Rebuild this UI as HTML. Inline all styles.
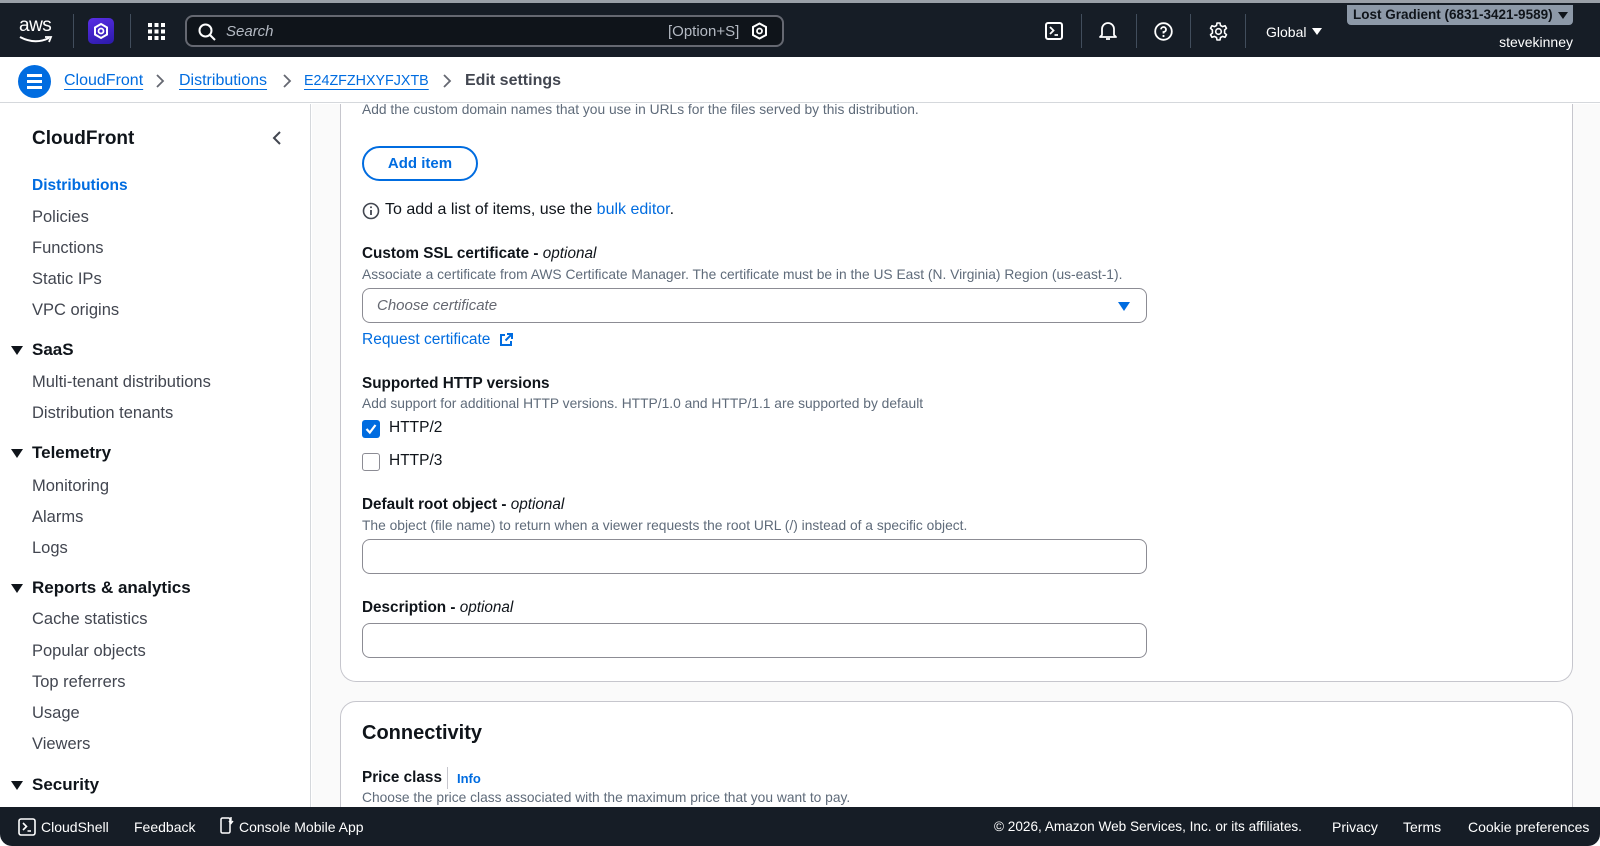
<!DOCTYPE html>
<html style="width:1600px;height:846px;overflow:hidden"><head><meta charset="utf-8"><style>
*{margin:0;padding:0;box-sizing:border-box}
body{width:1600px;height:846px;overflow:hidden;background:#fff;font-family:"Liberation Sans",Arial,sans-serif;color:#0f141a;position:relative}
.a{position:absolute;white-space:nowrap}
.t{line-height:20px}
.nav{position:absolute;left:0;top:3px;width:1600px;height:54px;background:#161d26}
.lnk{color:#006ce0;text-decoration:underline;text-underline-offset:4px}
.side{font-size:16.5px;color:#424650;line-height:20px}
.sh{font-size:17px;font-weight:bold;color:#0f141a;line-height:22px}
.tri{position:absolute;left:11px;width:0;height:0;border-left:6px solid transparent;border-right:6px solid transparent;border-top:9px solid #0f141a}
.lbl{font-size:15.3px;font-weight:bold;line-height:20px}
.lbl i{font-weight:normal}
.desc{font-size:13.8px;color:#5f6b7a;line-height:18px}
.inp{position:absolute;left:362px;width:785px;height:35px;border:1px solid #8c8c94;border-radius:8px;background:#fff}
</style></head><body>
<div class="a" style="left:0;top:0;width:1600px;height:3px;background:#9aa0a8"></div>
<div class="nav"></div>
<div class="a" style="left:19px;top:16px;color:#fff;font-size:19px;line-height:20px;letter-spacing:-0.5px">aws</div>
<svg class="a" style="left:18px;top:35px" width="36" height="10" viewBox="0 0 36 10"><path d="M2 2 Q17 10 31 3" stroke="#fff" stroke-width="2" fill="none"/><path d="M27 2 L33 2 L31 7" stroke="#fff" stroke-width="1.8" fill="none"/></svg>
<div class="a" style="left:73px;top:14px;width:1px;height:34px;background:#414d5c"></div>
<div class="a" style="left:88px;top:18px;width:26px;height:26px;border-radius:5px;background:linear-gradient(160deg,#5a2ee6,#2a1aa8)"></div>
<svg class="a" style="left:92px;top:22px" width="18" height="18" viewBox="0 0 18 18"><path d="M9 2 L15 5.5 L15 12.5 L9 16 L3 12.5 L3 5.5 Z" stroke="#fff" stroke-width="2" fill="none"/><circle cx="9" cy="9" r="2.5" stroke="#fff" stroke-width="1.8" fill="none"/></svg>
<div class="a" style="left:130px;top:14px;width:1px;height:34px;background:#414d5c"></div>
<svg class="a" style="left:148px;top:23px" width="17" height="17" viewBox="0 0 17 17" fill="#fff"><rect x="0" y="0" width="4" height="4"/><rect x="6.5" y="0" width="4" height="4"/><rect x="13" y="0" width="4" height="4"/><rect x="0" y="6.5" width="4" height="4"/><rect x="6.5" y="6.5" width="4" height="4"/><rect x="13" y="6.5" width="4" height="4"/><rect x="0" y="13" width="4" height="4"/><rect x="6.5" y="13" width="4" height="4"/><rect x="13" y="13" width="4" height="4"/></svg>
<div class="a" style="left:185px;top:15px;width:599px;height:32px;border:2px solid #656871;border-radius:8px;background:#0f141a"></div>
<svg class="a" style="left:198px;top:23px" width="18" height="18" viewBox="0 0 18 18"><circle cx="7.5" cy="7.5" r="6" stroke="#fff" stroke-width="2" fill="none"/><path d="M12 12 L17 17" stroke="#fff" stroke-width="2"/></svg>
<div class="a" style="left:226px;top:22px;color:#b4bac3;font-size:15px;font-style:italic;line-height:20px">Search</div>
<div class="a" style="left:668px;top:22px;color:#b4bac3;font-size:15px;line-height:20px">[Option+S]</div>
<svg class="a" style="left:751px;top:22px" width="17" height="18" viewBox="0 0 17 18"><path d="M8.5 1.5 L15 5 L15 13 L8.5 16.5 L2 13 L2 5 Z" stroke="#fff" stroke-width="2" fill="none"/><circle cx="8.5" cy="9" r="2.5" stroke="#fff" stroke-width="1.8" fill="none"/></svg>
<svg class="a" style="left:1045px;top:22px" width="18" height="18" viewBox="0 0 18 18"><rect x="1" y="1" width="16" height="16" rx="2" stroke="#fff" stroke-width="2" fill="none"/><path d="M5 5 L8.5 8.5 L5 12 M9.5 13 H13" stroke="#fff" stroke-width="1.8" fill="none"/></svg>
<div class="a" style="left:1081px;top:14px;width:1px;height:34px;background:#414d5c"></div>
<svg class="a" style="left:1099px;top:21px" width="18" height="20" viewBox="0 0 18 20"><path d="M3 14 L3 8 A6 6 0 0 1 15 8 L15 14 L17 16 L1 16 Z" stroke="#fff" stroke-width="1.8" fill="none" stroke-linejoin="round"/><path d="M7 18 H11" stroke="#fff" stroke-width="1.8"/></svg>
<div class="a" style="left:1136px;top:14px;width:1px;height:34px;background:#414d5c"></div>
<svg class="a" style="left:1154px;top:22px" width="19" height="19" viewBox="0 0 19 19"><circle cx="9.5" cy="9.5" r="8.3" stroke="#fff" stroke-width="1.8" fill="none"/><path d="M7 7.3 A2.5 2.5 0 1 1 9.5 10 L9.5 11.5" stroke="#fff" stroke-width="1.8" fill="none"/><circle cx="9.5" cy="14" r="1.1" fill="#fff"/></svg>
<div class="a" style="left:1190px;top:14px;width:1px;height:34px;background:#414d5c"></div>
<svg class="a" style="left:1209px;top:22px" width="19" height="19" viewBox="0 0 19 19"><path d="M8 1 H11 L11.5 3.5 L13.5 4.6 L16 3.7 L17.5 6.3 L15.6 8 L15.6 11 L17.5 12.7 L16 15.3 L13.5 14.4 L11.5 15.5 L11 18 H8 L7.5 15.5 L5.5 14.4 L3 15.3 L1.5 12.7 L3.4 11 L3.4 8 L1.5 6.3 L3 3.7 L5.5 4.6 L7.5 3.5 Z" stroke="#fff" stroke-width="1.6" fill="none" stroke-linejoin="round"/><circle cx="9.5" cy="9.5" r="2.8" stroke="#fff" stroke-width="1.6" fill="none"/></svg>
<div class="a" style="left:1245px;top:14px;width:1px;height:34px;background:#414d5c"></div>
<div class="a" style="left:1266px;top:22px;color:#fff;font-size:14px;line-height:20px">Global</div>
<div class="a" style="left:1312px;top:28px;border-left:5px solid transparent;border-right:5px solid transparent;border-top:7px solid #fff"></div>
<div class="a" style="left:1347px;top:5px;width:226px;height:20px;background:#8d99a8;border-radius:0 0 4px 4px"></div>
<div class="a" style="left:1353px;top:6px;color:#0f141a;font-size:13.5px;font-weight:bold;line-height:18px">Lost Gradient (6831-3421-9589)</div>
<div class="a" style="left:1558px;top:12px;border-left:5px solid transparent;border-right:5px solid transparent;border-top:7px solid #0f141a"></div>
<div class="a" style="left:1440px;top:32px;width:133px;text-align:right;color:#fff;font-size:14px;line-height:20px">stevekinney</div>
<div class="a" style="left:312px;top:104px;width:1288px;height:703px;background:#fafafa"></div>
<div class="a" style="left:340px;top:104px;width:1233px;height:578px;background:#fff;border:1px solid #c6c6cd;border-top:none;border-radius:0 0 16px 16px"></div>
<div class="a" style="left:0;top:58px;width:1600px;height:45px;background:#fff;border-bottom:1px solid #d5d8dc"></div>
<div class="a" style="left:18px;top:65px;width:33px;height:33px;border-radius:50%;background:#006ce0"></div>
<div class="a" style="left:27px;top:74px;width:15px;height:2.5px;background:#fff;box-shadow:0 6px 0 #fff,0 12px 0 #fff"></div>
<div class="a t" style="left:64px;top:71px;font-size:16px"><span class="lnk">CloudFront</span></div>
<svg class="a" style="left:155px;top:73px" width="10" height="16"><path d="M2 2 L8 8 L2 14" stroke="#656871" stroke-width="1.8" fill="none"/></svg>
<div class="a t" style="left:179px;top:71px;font-size:16px"><span class="lnk">Distributions</span></div>
<svg class="a" style="left:282px;top:73px" width="10" height="16"><path d="M2 2 L8 8 L2 14" stroke="#656871" stroke-width="1.8" fill="none"/></svg>
<div class="a t" style="left:304px;top:71px;font-size:14.3px"><span class="lnk">E24ZFZHXYFJXTB</span></div>
<svg class="a" style="left:442px;top:73px" width="10" height="16"><path d="M2 2 L8 8 L2 14" stroke="#656871" stroke-width="1.8" fill="none"/></svg>
<div class="a t" style="left:465px;top:71px;font-size:16px;font-weight:bold;color:#424650">Edit settings</div>
<div class="a" style="left:0;top:104px;width:311px;height:703px;background:#fff;border-right:1px solid #d5d8dc"></div>
<div class="a" style="left:32px;top:127px;font-size:19px;font-weight:bold;line-height:24px">CloudFront</div>
<svg class="a" style="left:272px;top:130px" width="10" height="16"><path d="M8 2 L2 8 L8 14" stroke="#424650" stroke-width="2" fill="none"/></svg>
<div class="a side" style="left:32px;top:176px;color:#006ce0;font-weight:bold;font-size:15.5px">Distributions</div>
<div class="a side" style="left:32px;top:207px">Policies</div>
<div class="a side" style="left:32px;top:238px">Functions</div>
<div class="a side" style="left:32px;top:269px">Static IPs</div>
<div class="a side" style="left:32px;top:300px">VPC origins</div>
<div class="tri" style="top:346px"></div><div class="a sh" style="left:32px;top:339px">SaaS</div>
<div class="a side" style="left:32px;top:372px">Multi-tenant distributions</div>
<div class="a side" style="left:32px;top:403px">Distribution tenants</div>
<div class="tri" style="top:449px"></div><div class="a sh" style="left:32px;top:442px">Telemetry</div>
<div class="a side" style="left:32px;top:476px">Monitoring</div>
<div class="a side" style="left:32px;top:507px">Alarms</div>
<div class="a side" style="left:32px;top:538px">Logs</div>
<div class="tri" style="top:584px"></div><div class="a sh" style="left:32px;top:577px">Reports &amp; analytics</div>
<div class="a side" style="left:32px;top:609px">Cache statistics</div>
<div class="a side" style="left:32px;top:641px">Popular objects</div>
<div class="a side" style="left:32px;top:672px">Top referrers</div>
<div class="a side" style="left:32px;top:703px">Usage</div>
<div class="a side" style="left:32px;top:734px">Viewers</div>
<div class="tri" style="top:781px"></div><div class="a sh" style="left:32px;top:774px">Security</div>
<div class="a desc" style="left:362px;top:101px">Add the custom domain names that you use in URLs for the files served by this distribution.</div>
<div class="a" style="left:362px;top:146px;width:116px;height:35px;border:2px solid #006ce0;border-radius:20px;color:#006ce0;font-weight:bold;font-size:15px;text-align:center;line-height:31px">Add item</div>
<svg class="a" style="left:362px;top:202px" width="18" height="18" viewBox="0 0 18 18"><circle cx="9" cy="9" r="7.5" stroke="#424650" stroke-width="1.6" fill="none"/><path d="M9 8 V13" stroke="#424650" stroke-width="1.8"/><circle cx="9" cy="5.3" r="1" fill="#424650"/></svg>
<div class="a t" style="left:385px;top:200px;font-size:16px">To add a list of items, use the <span style="color:#006ce0">bulk editor</span>.</div>
<div class="a lbl" style="left:362px;top:244px">Custom SSL certificate - <i>optional</i></div>
<div class="a desc" style="left:362px;top:266px">Associate a certificate from AWS Certificate Manager. The certificate must be in the US East (N. Virginia) Region (us-east-1).</div>
<div class="inp" style="top:288px"></div>
<div class="a t" style="left:377px;top:296px;font-size:15px;font-style:italic;color:#656871">Choose certificate</div>
<div class="a" style="left:1118px;top:302px;border-left:6px solid transparent;border-right:6px solid transparent;border-top:9px solid #006ce0"></div>
<div class="a t" style="left:362px;top:330px;font-size:15.5px;color:#006ce0">Request certificate</div>
<svg class="a" style="left:499px;top:332px" width="15" height="15" viewBox="0 0 15 15"><path d="M6 3 H2 V13 H12 V9" stroke="#006ce0" stroke-width="2" fill="none"/><path d="M8 2 H13 V7 M13 2 L6.5 8.5" stroke="#006ce0" stroke-width="2" fill="none"/></svg>
<div class="a lbl" style="left:362px;top:374px">Supported HTTP versions</div>
<div class="a desc" style="left:362px;top:395px">Add support for additional HTTP versions. HTTP/1.0 and HTTP/1.1 are supported by default</div>
<div class="a" style="left:362px;top:420px;width:18px;height:18px;border-radius:3px;background:#006ce0"></div>
<svg class="a" style="left:362px;top:420px" width="18" height="18"><path d="M4.5 9 L7.8 12.5 L13.5 5" stroke="#fff" stroke-width="2.2" fill="none"/></svg>
<div class="a t" style="left:389px;top:418px;font-size:15.5px">HTTP/2</div>
<div class="a" style="left:362px;top:453px;width:18px;height:18px;border-radius:3px;border:1.5px solid #8c8c94;background:#fff"></div>
<div class="a t" style="left:389px;top:451px;font-size:15.5px">HTTP/3</div>
<div class="a lbl" style="left:362px;top:495px">Default root object - <i>optional</i></div>
<div class="a desc" style="left:362px;top:517px">The object (file name) to return when a viewer requests the root URL (/) instead of a specific object.</div>
<div class="inp" style="top:539px"></div>
<div class="a lbl" style="left:362px;top:598px">Description - <i>optional</i></div>
<div class="inp" style="top:623px"></div>
<div class="a" style="left:340px;top:701px;width:1233px;height:140px;background:#fff;border:1px solid #c6c6cd;border-radius:16px"></div>
<div class="a" style="left:362px;top:721px;font-size:20px;font-weight:bold;line-height:24px">Connectivity</div>
<div class="a lbl" style="left:362px;top:768px">Price class</div>
<div class="a" style="left:447px;top:767px;width:1px;height:22px;background:#c6c6cd"></div>
<div class="a" style="left:457px;top:770px;font-size:13px;font-weight:bold;color:#006ce0;line-height:18px">Info</div>
<div class="a desc" style="left:362px;top:789px">Choose the price class associated with the maximum price that you want to pay.</div>
<div class="a" style="left:0;top:807px;width:1600px;height:39px;background:#161d26;border-radius:0 0 12px 12px"></div>
<svg class="a" style="left:18px;top:818px" width="18" height="18" viewBox="0 0 18 18"><rect x="1" y="1" width="16" height="16" rx="2" stroke="#fff" stroke-width="1.6" fill="none"/><path d="M5 5 L8.5 8.5 L5 12 M9.5 13 H13" stroke="#fff" stroke-width="1.6" fill="none"/></svg>
<div class="a t" style="left:41px;top:817px;color:#fff;font-size:14px">CloudShell</div>
<div class="a t" style="left:134px;top:817px;color:#fff;font-size:14px">Feedback</div>
<svg class="a" style="left:220px;top:816px" width="14" height="19" viewBox="0 0 14 19"><rect x="1" y="2" width="9" height="15" rx="1.5" stroke="#fff" stroke-width="1.5" fill="none"/><path d="M11 1 V7 M9 5 L11 7.5 L13 5" stroke="#fff" stroke-width="1.4" fill="none"/></svg>
<div class="a t" style="left:239px;top:817px;color:#fff;font-size:14px">Console Mobile App</div>
<div class="a t" style="left:994px;top:817px;color:#fff;font-size:13.6px">© 2026, Amazon Web Services, Inc. or its affiliates.</div>
<div class="a t" style="left:1332px;top:817px;color:#fff;font-size:14px">Privacy</div>
<div class="a t" style="left:1403px;top:817px;color:#fff;font-size:14px">Terms</div>
<div class="a t" style="left:1468px;top:817px;color:#fff;font-size:14px">Cookie preferences</div>
</body></html>
